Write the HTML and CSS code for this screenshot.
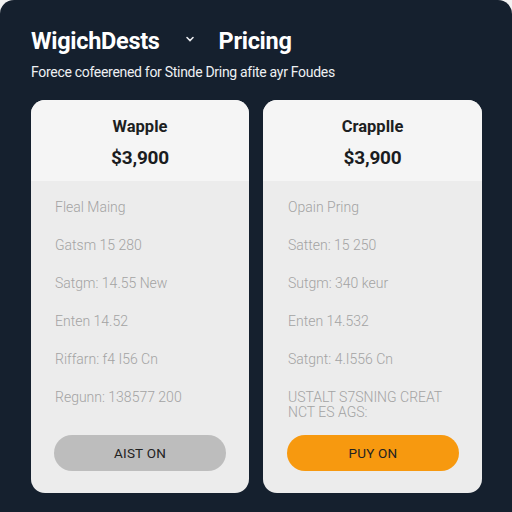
FILE: index.html
```html
<!DOCTYPE html>
<html>
<head>
<meta charset="utf-8">
<link rel="stylesheet" href="styles.css">
</head>
<body>
<main class="panel">
  <header class="top">
    <div class="title-row">
      <h1 class="brand">WigichDests</h1>
      <svg class="chev" width="10" height="8" viewBox="0 0 10 8"><path d="M2 2.5 L5 5.5 L8 2.5" fill="none" stroke="#e8eaee" stroke-width="1.6" stroke-linecap="round"/></svg>
      <h1 class="page">Pricing</h1>
    </div>
    <p class="sub">Forece cofeerened for Stinde Dring afite ayr Foudes</p>
  </header>
  <section class="plans">
    <article class="card">
      <div class="card-head">
        <h2 class="name">Wapple</h2>
        <div class="price">$3,900</div>
      </div>
      <ul class="feats">
        <li>Fleal Maing</li>
        <li>Gatsm 15 280</li>
        <li>Satgm: 14.55 New</li>
        <li>Enten 14.52</li>
        <li>Riffarn: f4 I56 Cn</li>
        <li>Regunn: 138577 200</li>
      </ul>
      <button class="btn btn-grey">AIST ON</button>
    </article>
    <article class="card">
      <div class="card-head">
        <h2 class="name">Crapplle</h2>
        <div class="price">$3,900</div>
      </div>
      <ul class="feats">
        <li>Opain Pring</li>
        <li>Satten: 15 250</li>
        <li>Sutgm: 340 keur</li>
        <li>Enten 14.532</li>
        <li>Satgnt: 4.I556 Cn</li>
        <li class="wrap">USTALT S7SNING CREAT NCT ES AGS:</li>
      </ul>
      <button class="btn btn-orange">PUY ON</button>
    </article>
  </section>
</main>
</body>
</html>
```
FILE: styles.css
```css
html, body {
  margin: 0;
  padding: 0;
  background: #f2f2f2;
}
body {
  font-family: Roboto, "Noto Sans", sans-serif;
  width: 512px;
  height: 512px;
  overflow: hidden;
}
.panel {
  background: #15202e;
  height: 530px;
  border-radius: 14px 14px 0 0;
  padding: 0 31px 0 31px;
  box-sizing: border-box;
}
.top {
  padding-top: 27px;
}
.title-row {
  display: flex;
  align-items: center;
  height: 28px;
}
.brand, .page {
  margin: 0;
  color: #ffffff;
  font-size: 23.5px;
  font-weight: 700;
  letter-spacing: -0.3px;
}
.chev {
  margin: -4px 0 0 25px;
}
.page {
  margin-left: 24px;
}
.sub {
  margin: 9px 0 0 0;
  color: #eef0f3;
  font-size: 14px;
  letter-spacing: -0.3px;
}
.plans {
  margin-top: 20px;
  display: grid;
  grid-template-columns: 218px 219px;
  gap: 14px;
}
.card {
  background: #ececec;
  border-radius: 14px;
  height: 393px;
  overflow: hidden;
  display: flex;
  flex-direction: column;
}
.card-head {
  background: #f5f5f5;
  height: 81px;
  text-align: center;
  padding-top: 17px;
  box-sizing: border-box;
}
.name {
  margin: 0;
  font-size: 16.5px;
  font-weight: 700;
  color: #1d1f22;
  line-height: 20px;
}
.price {
  margin-top: 10px;
  font-size: 19px;
  font-weight: 700;
  color: #1a1c1f;
  line-height: 22px;
  letter-spacing: -0.2px;
}
.feats {
  list-style: none;
  margin: 0;
  padding: 17px 20px 0 24px;
}
.card + .card .feats {
  padding-left: 25px;
}
.feats li {
  font-size: 14px;
  font-weight: 300;
  color: #a3a3a3;
  height: 38px;
  line-height: 18px;
}
.feats li.wrap {
  line-height: 15px;
  padding-top: 2px;
}
.btn {
  margin: auto 23px 22px 23px;
  height: 36px;
  border: none;
  border-radius: 18px;
  font-family: Roboto, "Noto Sans", sans-serif;
  font-size: 13.5px;
  color: #222;
  letter-spacing: 0.2px;
}
.btn-grey {
  background: #bdbdbd;
}
.btn-orange {
  background: #f7990f;
  margin-left: 24px;
}
```
